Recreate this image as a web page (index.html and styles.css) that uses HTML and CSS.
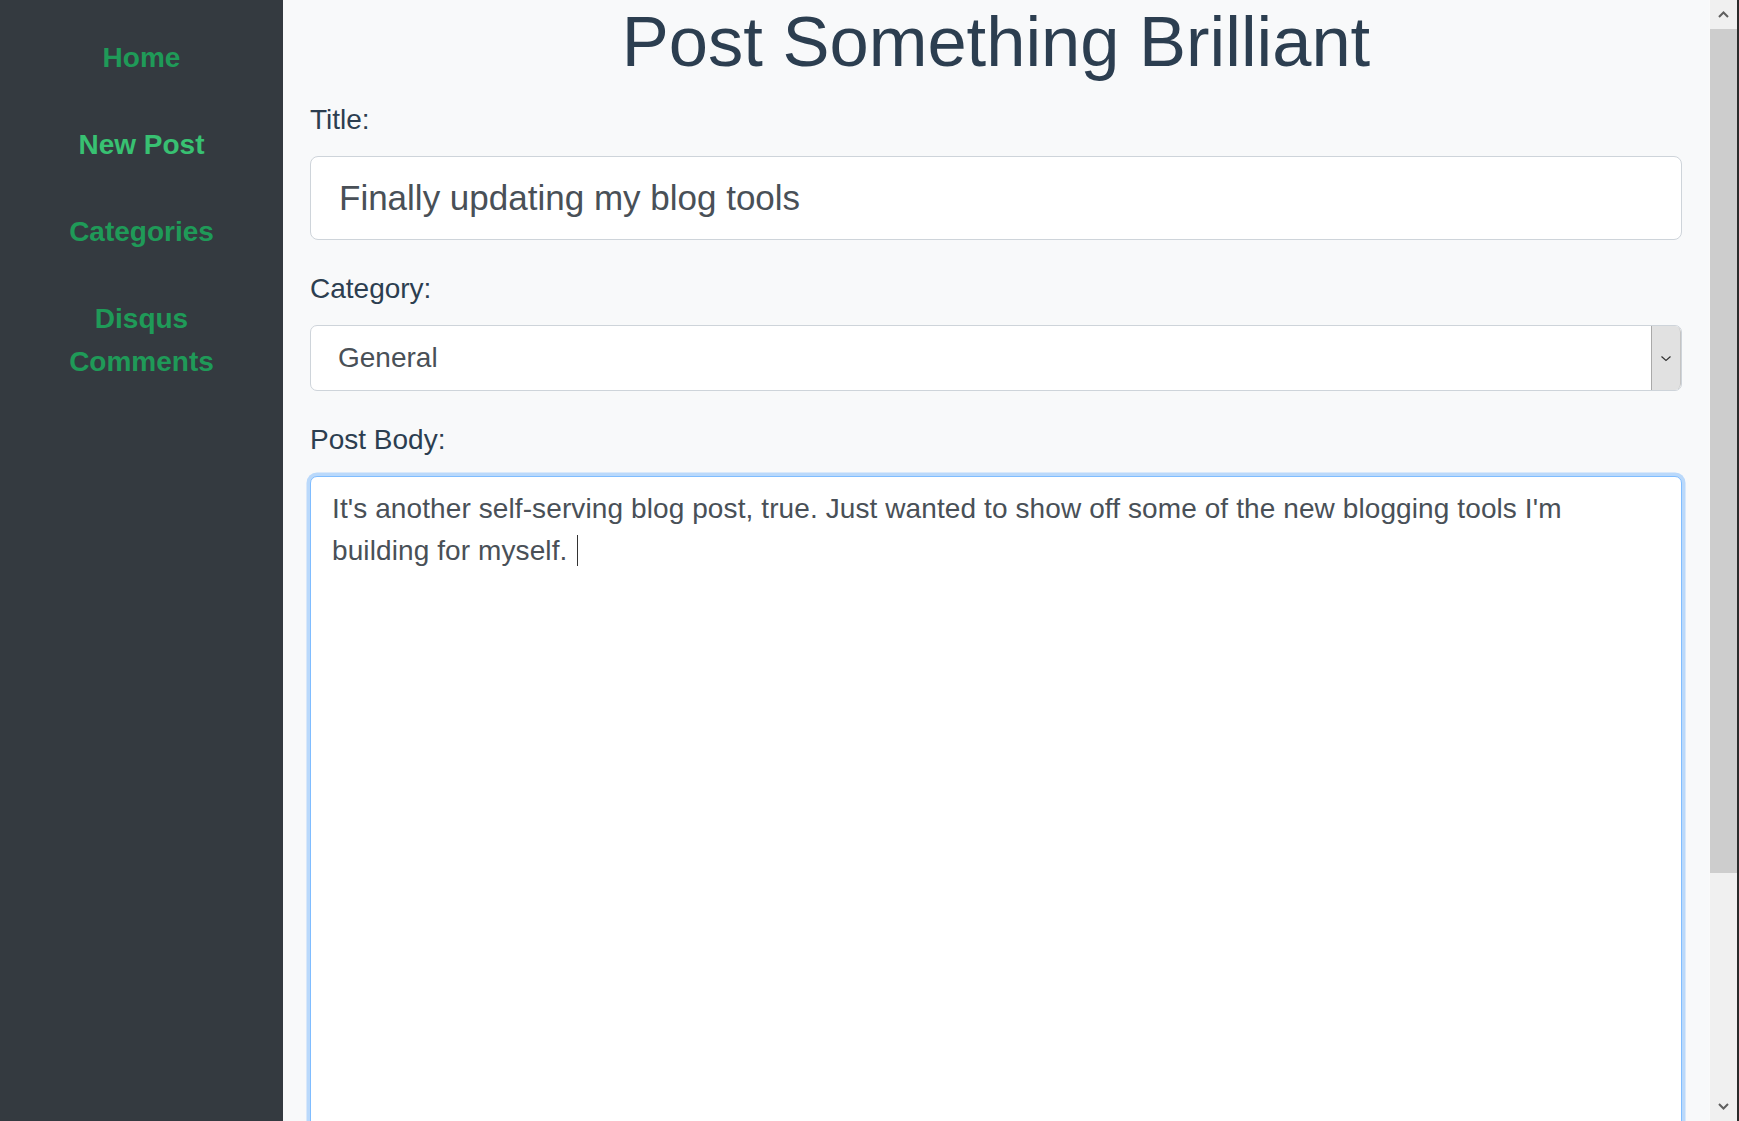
FILE: index.html
```
<!DOCTYPE html>
<html>
	<head>
		<meta charset="UTF-8">
		<title>New Post</title>
		<link rel="stylesheet" href="styles.css">
	</head>
	<body>
		<div id="page">
			<nav id="sidebar">
				<a class="nav_link" href="#">Home</a>
				<a class="nav_link active" href="#">New Post</a>
				<a class="nav_link" href="#">Categories</a>
				<a class="nav_link" href="#">Disqus Comments</a>
			</nav>
			<main id="content">
				<h1 class="page_title">Post Something Brilliant</h1>
				<form>
					<div class="form_group">
						<label for="title">Title:</label>
						<input id="title" class="form_control form_control_lg" type="text" value="Finally updating my blog tools">
					</div>
					<div class="form_group">
						<label>Category:</label>
						<div class="select_box">
							<span class="select_text">General</span>
							<span class="select_btn">
								<svg width="12" height="7" viewBox="0 0 12 7"><path d="M1.5 1.5 L6 5.5 L10.5 1.5" fill="none" stroke="#333" stroke-width="1.2"/></svg>
							</span>
						</div>
					</div>
					<div class="form_group">
						<label>Post Body:</label>
						<div class="body_box">It's another self-serving blog post, true. Just wanted to show off some of the new blogging tools I'm<br>building for myself. <span class="caret"></span></div>
					</div>
				</form>
			</main>
			<div id="scrollbar">
				<div class="scroll_arrow">
					<svg width="11" height="7" viewBox="0 0 11 7"><path d="M1 6 L5.5 1.5 L10 6" fill="none" stroke="#606060" stroke-width="2"/></svg>
				</div>
				<div class="scroll_thumb"></div>
				<div class="scroll_track"></div>
				<div class="scroll_arrow">
					<svg width="11" height="7" viewBox="0 0 11 7"><path d="M1 1 L5.5 5.5 L10 1" fill="none" stroke="#606060" stroke-width="2"/></svg>
				</div>
			</div>
		</div>
	</body>
</html>
```
FILE: styles.css
```
*{margin: 0;padding: 0;box-sizing: border-box;}
html,body{height: 100%;overflow: hidden;}
body{
	font-family: "Liberation Sans", Arial, sans-serif;
	font-size: 28px;
	line-height: 1.5;
	color: #2c3e50;
	background-color: #f8f9fa;
}
#page{
	display: flex;
	height: 100vh;
}
#sidebar{
	width: 283px;
	flex-shrink: 0;
	background-color: #343a40;
	display: flex;
	flex-direction: column;
	gap: 44px;
	padding: 36px 28px 0;
	text-align: center;
}
.nav_link{
	font-weight: bold;
	font-size: 28px;
	line-height: 43px;
	color: #1f9a58;
	text-decoration: none;
}
.nav_link.active{
	color: #38c172;
}
#content{
	flex: 1;
	padding: 0 27px;
	overflow: hidden;
}
.page_title{
	font-size: 70.5px;
	font-weight: normal;
	line-height: 84px;
	text-align: center;
	margin-bottom: 15px;
	color: #2c3e50;
}
.form_group{
	margin-bottom: 28px;
}
label{
	display: block;
	margin-bottom: 15px;
	line-height: 42px;
}
.form_control{
	display: block;
	width: 100%;
	font-family: "Liberation Sans", Arial, sans-serif;
	color: #495057;
	background-color: #fff;
	border: 1px solid #ced4da;
	border-radius: 7px;
	outline: none;
}
.form_control_lg{
	height: 84px;
	font-size: 35px;
	line-height: 52px;
	padding: 14px 28px;
	border-radius: 8px;
}
.select_box{
	display: flex;
	height: 66px;
	background-color: #fff;
	border: 1px solid #ced4da;
	border-radius: 7px;
	color: #495057;
	overflow: hidden;
}
.select_text{
	flex: 1;
	padding-left: 27px;
	line-height: 64px;
}
.select_btn{
	width: 30px;
	display: flex;
	align-items: center;
	justify-content: center;
	background-color: #e1e1e1;
	border-left: 1px solid #a9a9a9;
	border-right: 1px solid #c4c4c4;
	border-radius: 0 6px 6px 0;
}
.body_box{
	height: 800px;
	background-color: #fff;
	border: 1px solid #80bdff;
	border-radius: 7px;
	box-shadow: 0 0 0 3.5px rgba(0,123,255,.25);
	padding: 11px 21px;
	color: #495057;
	line-height: 42px;
	letter-spacing: 0.1px;
}
.caret{
	display: inline-block;
	width: 1px;
	height: 31px;
	background-color: #333;
	vertical-align: -6px;
	margin-left: 2px;
}
#scrollbar{
	width: 30px;
	flex-shrink: 0;
	display: flex;
	flex-direction: column;
	background-color: #f0f0f0;
	border-left: 1px solid #fafafa;
	border-right: 2px solid #2b2b2b;
}
.scroll_arrow{
	height: 29px;
	display: flex;
	align-items: center;
	justify-content: center;
}
.scroll_thumb{
	height: 844px;
	background-color: #cdcdcd;
}
.scroll_track{
	flex: 1;
}
```
